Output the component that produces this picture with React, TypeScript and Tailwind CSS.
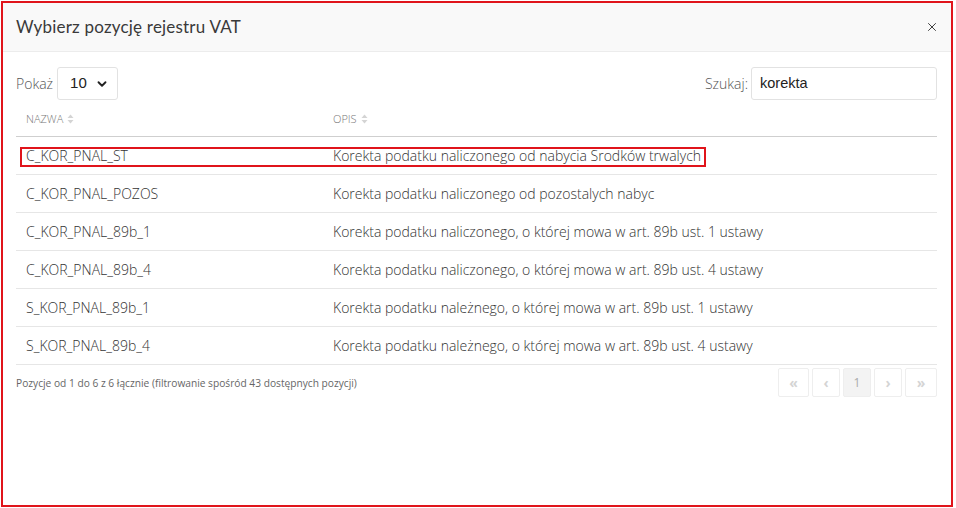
import { ChevronDown, X } from "lucide-react";

const rows = [
  { name: "C_KOR_PNAL_ST", desc: "Korekta podatku naliczonego od nabycia Srodków trwalych", marked: true },
  { name: "C_KOR_PNAL_POZOS", desc: "Korekta podatku naliczonego od pozostalych nabyc" },
  { name: "C_KOR_PNAL_89b_1", desc: "Korekta podatku naliczonego, o której mowa w art. 89b ust. 1 ustawy" },
  { name: "C_KOR_PNAL_89b_4", desc: "Korekta podatku naliczonego, o której mowa w art. 89b ust. 4 ustawy" },
  { name: "S_KOR_PNAL_89b_1", desc: "Korekta podatku należnego, o której mowa w art. 89b ust. 1 ustawy" },
  { name: "S_KOR_PNAL_89b_4", desc: "Korekta podatku należnego, o której mowa w art. 89b ust. 4 ustawy" },
];

function SortIcon() {
  return (
    <svg width="7" height="10" viewBox="0 0 7 10" className="ml-1 inline-block">
      <path d="M3.5 0.5 L6.5 4 L0.5 4 Z" fill="#d4d4d4" />
      <path d="M3.5 9.5 L6.5 6 L0.5 6 Z" fill="#d4d4d4" />
    </svg>
  );
}

export default function App() {
  return (
    <div className="w-[956px] h-[508px] bg-white pt-px pl-px" style={{ fontFamily: "'Open Sans', sans-serif" }}>
      <div className="w-[952px] h-[506px] border-2 border-[#e0141b] flex flex-col">
        {/* nagłówek */}
        <div className="h-[49px] bg-[#f9f9f9] border-b border-[#ececec] flex items-center justify-between pl-[13px] pr-[12px]">
          <h1 className="text-[17px] text-[#3a3a3a] font-['Lato',sans-serif] tracking-[0.2px]">Wybierz pozycję rejestru VAT</h1>
          <X size={14} strokeWidth={1.6} className="text-[#333]" />
        </div>

        <div className="pl-[13px] pr-[14px] pt-[15px]">
          {/* kontrolki */}
          <div className="flex items-center justify-between h-[33px]">
            <div className="flex items-center text-[14px] font-light text-[#555]">
              <span>Pokaż</span>
              <div className="ml-[4px] w-[61px] h-[33px] border border-[#e2e2e2] rounded-[3px] flex items-center justify-between pl-[12px] pr-[8px] text-[#222] font-['Liberation_Sans',sans-serif] text-[15px]">
                <span>10</span>
                <ChevronDown size={14} strokeWidth={3.2} className="text-[#222]" />
              </div>
            </div>
            <div className="flex items-center text-[14px] font-light text-[#555]">
              <span>Szukaj:</span>
              <div className="ml-[3px] w-[186px] h-[33px] border border-[#e2e2e2] rounded-[3px] flex items-center pl-[8px] text-[#222] font-['Liberation_Sans',sans-serif] text-[14.5px]">
                korekta
              </div>
            </div>
          </div>

          {/* tabela */}
          <div className="mt-[2px]">
            <div className="flex h-[35px] items-center border-b border-[#cfcfcf] text-[11px] font-light text-[#777] uppercase">
              <div className="w-[307px] pl-[10px] flex items-center">Nazwa<SortIcon /></div>
              <div className="flex-1 pl-[10px] flex items-center">Opis<SortIcon /></div>
            </div>
            {rows.map((r) => (
              <div key={r.name} className="relative flex h-[38px] items-center border-b border-[#e6e6e6] text-[14px] font-light text-[#333]">
                <div className="w-[307px] pl-[10px]">{r.name}</div>
                <div className="flex-1 pl-[10px]">{r.desc}</div>
                {r.marked && (
                  <div className="absolute left-[4px] top-[10px] w-[686px] h-[20px] border-2 border-[#e0141b]" />
                )}
              </div>
            ))}
          </div>

          {/* stopka */}
          <div className="flex items-start justify-between mt-[3px]">
            <div className="text-[10.2px] text-[#666] pt-[8px]">
              Pozycje od 1 do 6 z 6 łącznie (filtrowanie spośród 43 dostępnych pozycji)
            </div>
            <div className="flex gap-[3px] text-[14px] font-bold text-[#d4d4d4]">
              <div className="w-[31px] h-[29px] border border-[#eee] rounded-[2px] flex items-center justify-center">«</div>
              <div className="w-[28px] h-[29px] border border-[#eee] rounded-[2px] flex items-center justify-center">‹</div>
              <div className="w-[28px] h-[29px] border border-[#eee] bg-[#f3f3f3] rounded-[2px] flex items-center justify-center text-[12px] font-normal text-[#aaa]">1</div>
              <div className="w-[28px] h-[29px] border border-[#eee] rounded-[2px] flex items-center justify-center">›</div>
              <div className="w-[32px] h-[29px] border border-[#eee] rounded-[2px] flex items-center justify-center">»</div>
            </div>
          </div>
        </div>
      </div>
    </div>
  );
}
